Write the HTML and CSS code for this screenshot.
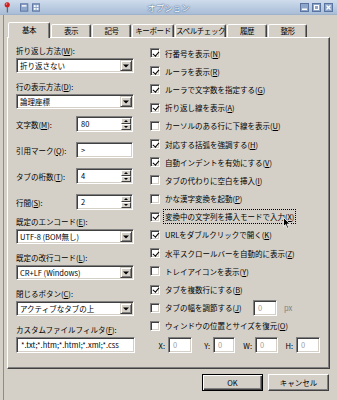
FILE: index.html
```html
<!DOCTYPE html>
<html lang="ja">
<head>
    <meta charset="UTF-8">
    <title>オプション</title>
    <link rel="stylesheet" href="styles.css">
</head>
<body>
<div class="window">
    <div class="titlebar">
        <div class="tb-side tb-left">
            <svg class="pin" width="7" height="12" viewBox="0 0 7 12">
                <rect x="3" y="5" width="1.4" height="7" fill="#6b6b6b"/>
                <circle cx="3.5" cy="3.5" r="2.8" fill="#d02020"/>
                <circle cx="2.7" cy="2.7" r="0.9" fill="#f3a0a0"/>
            </svg>
            <svg class="tb-btn" width="9" height="9" viewBox="0 0 9 9">
                <rect x="0.5" y="0.5" width="8" height="8" fill="#8fa6cb" stroke="#5a74a0"/>
                <rect x="2" y="2" width="5" height="1.5" fill="#fff"/>
            </svg>
            <svg class="tb-btn" width="9" height="9" viewBox="0 0 9 9">
                <rect x="0.5" y="0.5" width="8" height="8" fill="#8fa6cb" stroke="#5a74a0"/>
                <rect x="2" y="2" width="2" height="2" fill="#fff"/>
                <rect x="5" y="2" width="2" height="2" fill="#fff"/>
                <rect x="2" y="5" width="2" height="2" fill="#fff"/>
                <rect x="5" y="5" width="2" height="2" fill="#fff"/>
            </svg>
        </div>
        <div class="tb-title">オプション</div>
        <div class="tb-side tb-right">
            <svg class="tb-btn" width="9" height="9" viewBox="0 0 9 9">
                <rect x="0.5" y="0.5" width="8" height="8" fill="#8fa6cb" stroke="#5a74a0"/>
                <rect x="2" y="5.5" width="5" height="1.5" fill="#fff"/>
            </svg>
            <svg class="tb-btn" width="9" height="9" viewBox="0 0 9 9">
                <rect x="0.5" y="0.5" width="8" height="8" fill="#8fa6cb" stroke="#5a74a0"/>
                <rect x="2.5" y="2.5" width="4" height="4" fill="none" stroke="#fff"/>
            </svg>
            <svg class="tb-btn" width="9" height="9" viewBox="0 0 9 9">
                <rect x="0.5" y="0.5" width="8" height="8" fill="#8fa6cb" stroke="#5a74a0"/>
                <path d="M2.5 2.5 L6.5 6.5 M6.5 2.5 L2.5 6.5" stroke="#fff" stroke-width="1.3"/>
            </svg>
        </div>
    </div>

    <div class="client">
        <div class="tabs">
            <div class="tab active w42">基本</div>
            <div class="tab w40">表示</div>
            <div class="tab w39">記号</div>
            <div class="tab w42">キーボード</div>
            <div class="tab w51">スペルチェック</div>
            <div class="tab w40">履歴</div>
            <div class="tab w39">整形</div>
        </div>

        <div class="panel">
            <div class="col-left">
                <div class="field">
                    <span class="lbl">折り返し方法(<u>W</u>):</span>
                    <div class="combo"><span class="combo-text">折り返さない</span><span class="drop"></span></div>
                </div>
                <div class="field">
                    <span class="lbl">行の表示方法(<u>D</u>):</span>
                    <div class="combo"><span class="combo-text">論理座標</span><span class="drop"></span></div>
                </div>

                <div class="spin-row first">
                    <span class="spin-lbl">文字数(<u>M</u>):</span>
                    <div class="edit spin"><span class="edit-text">80</span><span class="arrows"><span class="up"></span><span class="down"></span></span></div>
                </div>
                <div class="spin-row">
                    <span class="spin-lbl">引用マーク(<u>Q</u>):</span>
                    <div class="edit spin"><span class="edit-text">&gt;</span></div>
                </div>
                <div class="spin-row">
                    <span class="spin-lbl">タブの桁数(<u>T</u>):</span>
                    <div class="edit spin"><span class="edit-text">4</span><span class="arrows"><span class="up"></span><span class="down"></span></span></div>
                </div>
                <div class="spin-row">
                    <span class="spin-lbl">行間(<u>S</u>):</span>
                    <div class="edit spin"><span class="edit-text">2</span><span class="arrows"><span class="up"></span><span class="down"></span></span></div>
                </div>

                <div class="field after-spin">
                    <span class="lbl">既定のエンコード(<u>E</u>):</span>
                    <div class="combo"><span class="combo-text">UTF-8 (BOM無し)</span><span class="drop"></span></div>
                </div>
                <div class="field">
                    <span class="lbl">既定の改行コード(<u>L</u>):</span>
                    <div class="combo"><span class="combo-text">CR+LF (Windows)</span><span class="drop"></span></div>
                </div>
                <div class="field">
                    <span class="lbl">閉じるボタン(<u>C</u>):</span>
                    <div class="combo"><span class="combo-text">アクティブなタブの上</span><span class="drop"></span></div>
                </div>
                <div class="field">
                    <span class="lbl">カスタムファイルフィルタ(<u>F</u>):</span>
                    <div class="edit wide"><span class="edit-text">*.txt;*.htm;*.html;*.xml;*.css</span></div>
                </div>
            </div>

            <div class="col-right">
                <div class="check-row"><span class="cb on"></span>行番号を表示(<u>N</u>)</div>
                <div class="check-row"><span class="cb on"></span>ルーラを表示(<u>R</u>)</div>
                <div class="check-row"><span class="cb on"></span>ルーラで文字数を指定する(<u>G</u>)</div>
                <div class="check-row"><span class="cb on"></span>折り返し線を表示(<u>A</u>)</div>
                <div class="check-row"><span class="cb"></span>カーソルのある行に下線を表示(<u>U</u>)</div>
                <div class="check-row"><span class="cb on"></span>対応する括弧を強調する(<u>H</u>)</div>
                <div class="check-row"><span class="cb on"></span>自動インデントを有効にする(<u>V</u>)</div>
                <div class="check-row"><span class="cb"></span>タブの代わりに空白を挿入(<u>I</u>)</div>
                <div class="check-row"><span class="cb"></span>かな漢字変換を起動(<u>P</u>)</div>
                <div class="check-row cursor-row">
                    <span class="cb on"></span><span class="focus">変換中の文字列を挿入モードで入力(<u>X</u>)</span>
                    <svg class="cursor" width="8" height="12" viewBox="0 0 8 12">
                        <path d="M0.5 0.5 L0.5 9.5 L2.6 7.6 L4.2 11.2 L5.6 10.6 L4.1 7.1 L7 7.1 Z" fill="#000" stroke="#fff" stroke-width="0.8"/>
                    </svg>
                </div>
                <div class="check-row"><span class="cb on"></span>URLをダブルクリックで開く(<u>K</u>)</div>
                <div class="check-row"><span class="cb on"></span>水平スクロールバーを自動的に表示(<u>Z</u>)</div>
                <div class="check-row"><span class="cb"></span>トレイアイコンを表示(<u>Y</u>)</div>
                <div class="check-row"><span class="cb on"></span>タブを複数行にする(<u>B</u>)</div>
                <div class="check-row">
                    <span class="cb"></span><span class="tabw-lbl">タブの幅を調節する(<u>J</u>)</span>
                    <div class="edit small off"><span class="edit-text">0</span></div>
                    <span class="unit">px</span>
                </div>
                <div class="check-row"><span class="cb"></span>ウィンドウの位置とサイズを復元(<u>O</u>)</div>

                <div class="coords">
                    <span class="coord-lbl">X:</span>
                    <div class="edit off"><span class="edit-text">0</span></div>
                    <span class="coord-lbl">Y:</span>
                    <div class="edit off"><span class="edit-text">0</span></div>
                    <span class="coord-lbl">W:</span>
                    <div class="edit off"><span class="edit-text">0</span></div>
                    <span class="coord-lbl">H:</span>
                    <div class="edit off"><span class="edit-text">0</span></div>
                </div>
            </div>
        </div>

        <div class="actions">
            <button class="btn default">OK</button>
            <button class="btn">キャンセル</button>
        </div>
    </div>
</div>
</body>
</html>
```

FILE: styles.css
```css
* {
    box-sizing: border-box;
}

body {
    margin: 0;
    width: 337px;
    height: 400px;
    overflow: hidden;
    background: #d4d0c8;
    color: #000;
    font-family: "Noto Sans CJK JP", "Noto Sans", sans-serif;
    font-size: 7.5px;
}

.window {
    width: 337px;
    height: 400px;
    display: flex;
    flex-direction: column;
}

/* title bar */

.titlebar {
    height: 15px;
    display: flex;
    align-items: center;
    background: linear-gradient(#cfdcec, #a9bdd7);
    border-bottom: 1px solid #9fb2cc;
}

.tb-side {
    width: 40px;
    display: flex;
    align-items: center;
    gap: 3px;
}

.tb-left {
    padding-left: 4px;
}

.tb-left .pin {
    margin-right: 7px;
}

.tb-right {
    justify-content: flex-end;
    padding-right: 4px;
}

.tb-btn {
    display: block;
}

.tb-title {
    flex: 1;
    text-align: center;
    color: #fff;
    font-size: 8.5px;
    line-height: 14px;
    text-shadow: 0 0 1px #4d6690, 0 0 1px #4d6690, 0 0 2px #6b84aa;
}

/* client */

.client {
    flex: 1;
    padding: 7px 7px 0 7px;
    background: linear-gradient(to right, transparent 3px, #8c8c8c 3px, #8c8c8c 4px, transparent 4px), #d4d0c8;
}

.tabs {
    display: flex;
    align-items: flex-end;
    gap: 1px;
    height: 15px;
    padding-left: 1px;
    position: relative;
    z-index: 1;
}

.tab {
    height: 13px;
    border: 1px solid;
    border-bottom: none;
    border-color: #fff #404040 transparent #fff;
    border-radius: 2px 2px 0 0;
    box-shadow: inset -1px 0 #808080;
    background: #d4d0c8;
    text-align: center;
    line-height: 11px;
    letter-spacing: -0.4px;
    white-space: nowrap;
    overflow: hidden;
}

.tab.active {
    height: 16px;
    margin-bottom: -1px;
    line-height: 13px;
}

.w39 { width: 39px; }
.w40 { width: 40px; }
.w42 { width: 42px; }
.w51 { width: 51px; }

.panel {
    height: 332px;
    display: flex;
    padding: 6px 0 0 8px;
    border: 1px solid;
    border-color: #fff #404040 #404040 #fff;
    box-shadow: inset -1px -1px #808080;
}

/* left column */

.col-left {
    width: 118px;
    padding-top: 2px;
}

.lbl {
    display: block;
    height: 10px;
    line-height: 10px;
    margin-bottom: 2px;
    white-space: nowrap;
}

.field {
    margin-top: 9px;
}

.field:first-child {
    margin-top: 0;
}

.field.after-spin {
    margin-top: 7px;
}

.combo {
    height: 15px;
    display: flex;
    align-items: stretch;
    background: #fff;
    border: 1px solid;
    border-color: #808080 #fff #fff #808080;
    box-shadow: inset 1px 1px #404040, inset -1px -1px #d4d0c8;
    padding: 1px;
}

.combo-text {
    flex: 1;
    padding-left: 2px;
    line-height: 11px;
    white-space: nowrap;
    overflow: hidden;
}

.drop {
    width: 12px;
    position: relative;
    background: #d4d0c8;
    border: 1px solid;
    border-color: #d4d0c8 #404040 #404040 #d4d0c8;
    box-shadow: inset 1px 1px #fff, inset -1px -1px #808080;
}

.drop::after,
.up::after,
.down::after {
    content: "";
    position: absolute;
    left: 50%;
    top: 50%;
    border-left: 3px solid transparent;
    border-right: 3px solid transparent;
    transform: translate(-50%, -50%);
}

.drop::after,
.down::after {
    border-top: 3px solid #000;
}

.up::after {
    border-bottom: 3px solid #000;
}

.spin-row {
    display: flex;
    align-items: center;
    height: 16px;
    margin-top: 10px;
}

.spin-row.first {
    margin-top: 7px;
}

.spin-lbl {
    width: 60px;
    white-space: nowrap;
}

.edit {
    height: 16px;
    display: flex;
    background: #fff;
    border: 1px solid;
    border-color: #808080 #fff #fff #808080;
    box-shadow: inset 1px 1px #404040, inset -1px -1px #d4d0c8;
    padding: 1px;
    overflow: hidden;
}

.edit-text {
    flex: 1;
    padding-left: 3px;
    line-height: 12px;
    white-space: nowrap;
    overflow: hidden;
}

.edit.spin {
    width: 57px;
}

.edit.wide {
    width: 119px;
}

.edit.off .edit-text {
    color: #a0a0a0;
}

.arrows {
    width: 10px;
    display: flex;
    flex-direction: column;
}

.up,
.down {
    flex: 1;
    position: relative;
    background: #d4d0c8;
    border: 1px solid;
    border-color: #fff #404040 #404040 #fff;
}

.up::after,
.down::after {
    border-left-width: 2px;
    border-right-width: 2px;
    border-top-width: 2px;
    border-bottom-width: 2px;
}

/* right column */

.col-right {
    margin-left: 16px;
    flex: 1;
}

.check-row {
    height: 18.2px;
    display: flex;
    align-items: center;
    white-space: nowrap;
}

.cursor-row {
    position: relative;
}

.cb {
    width: 10px;
    height: 10px;
    flex: none;
    margin-right: 5px;
    position: relative;
    background: #fff;
    border: 1px solid;
    border-color: #808080 #fff #fff #808080;
    box-shadow: inset 1px 1px #404040, inset -1px -1px #d4d0c8;
}

.cb.on::after {
    content: "";
    position: absolute;
    left: 2.5px;
    top: 0.5px;
    width: 2.5px;
    height: 5px;
    border: solid #000;
    border-width: 0 1.5px 1.5px 0;
    transform: rotate(40deg);
}

.focus {
    outline: 1px dotted #000;
    outline-offset: 1px;
}

.cursor {
    position: absolute;
    left: 133px;
    top: 9px;
}

.tabw-lbl {
    width: 88px;
}

.edit.small {
    width: 24px;
}

.unit {
    margin-left: 7px;
    color: #808080;
}

.coords {
    display: grid;
    grid-template-columns: 18px 24px 21px 22px 20px 23px 18px 24px;
    align-items: center;
    height: 16px;
    margin-top: 2px;
}

.coord-lbl {
    text-align: right;
    padding-right: 3px;
}

/* buttons */

.actions {
    display: flex;
    justify-content: flex-end;
    gap: 5px;
    margin-top: 5px;
    padding-right: 1px;
}

.btn {
    width: 61px;
    height: 17px;
    padding: 0;
    font-family: inherit;
    font-size: 7.5px;
    color: #000;
    background: #d4d0c8;
    border: 1px solid;
    border-color: #fff #404040 #404040 #fff;
    box-shadow: inset -1px -1px #808080;
}

.btn.default {
    border-color: #000;
    box-shadow: inset 1px 1px #fff, inset -1px -1px #404040, inset -2px -2px #808080;
}
```
